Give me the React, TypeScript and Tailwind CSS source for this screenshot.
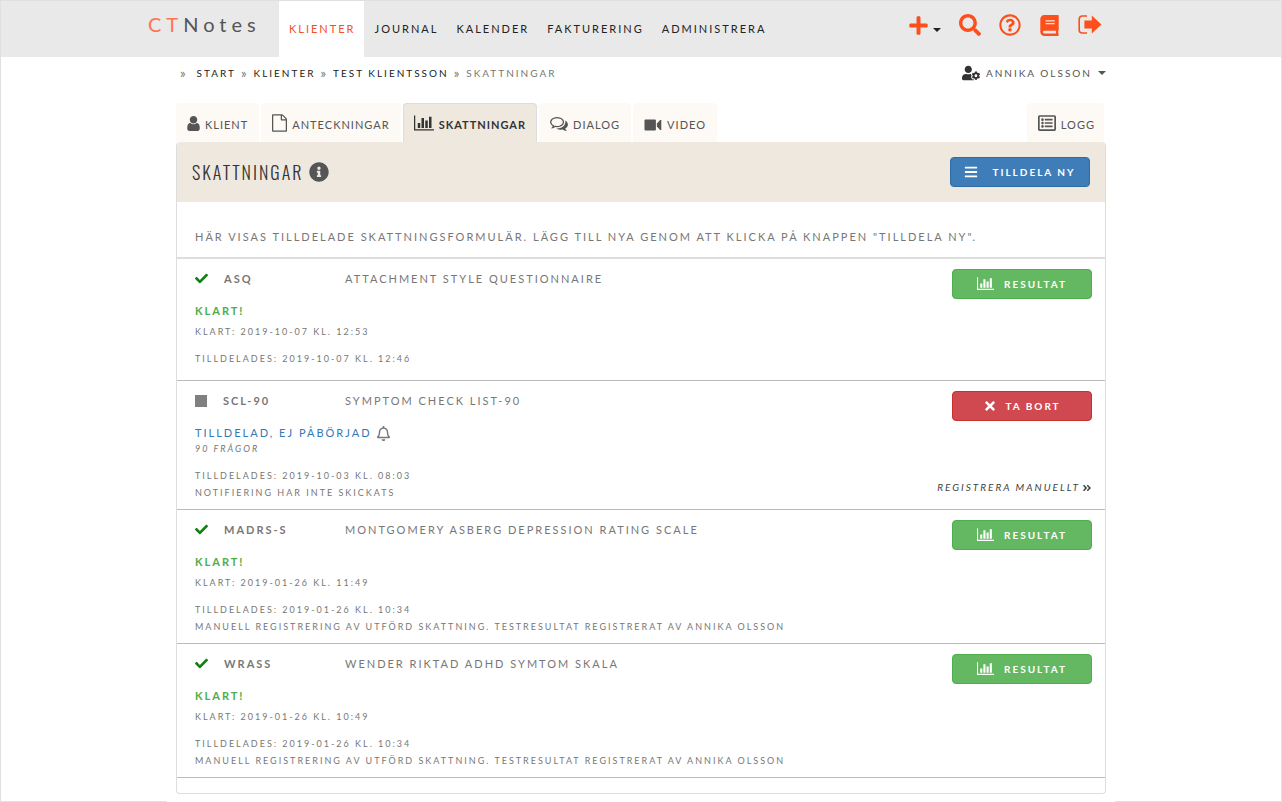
import React from "react";
import {
  FaAngleDoubleRight,
  FaBars,
  FaBook,
  FaCheck,
  FaInfoCircle,
  FaPlus,
  FaRegBell,
  FaRegListAlt,
  FaRegQuestionCircle,
  FaSearch,
  FaTimes,
  FaUserCog,
} from "react-icons/fa";

type IconProps = { className?: string };

const ChartIcon = ({ className }: IconProps) => (
  <svg viewBox="0 0 2048 1792" fill="currentColor" className={className} aria-hidden="true">
    <path d="M640 896v512h-256v-512h256zm384-512v1024h-256v-1024h256zm1024 1152v128h-2048v-1536h128v1408h1920zm-640-896v768h-256v-768h256zm384-384v1152h-256v-1152h256z" />
  </svg>
);

const UserIcon = ({ className }: IconProps) => (
  <svg viewBox="256 128 1280 1536" fill="currentColor" className={className} aria-hidden="true">
    <path d="M1536 1399q0 109-62.5 187t-150.5 78h-854q-88 0-150.5-78t-62.5-187q0-85 8.5-160.5t31.5-152 58.5-131 94-89 134.5-34.5q131 128 313 128t313-128q76 0 134.5 34.5t94 89 58.5 131 31.5 152 8.5 160.5zm-256-887q0 159-112.5 271.5t-271.5 112.5-271.5-112.5-112.5-271.5 112.5-271.5 271.5-112.5 271.5 112.5 112.5 271.5z" />
  </svg>
);

const FileIcon = ({ className }: IconProps) => (
  <svg viewBox="128 0 1536 1792" fill="currentColor" className={className} aria-hidden="true">
    <path d="M1596 380q28 28 48 76t20 88v1152q0 40-28 68t-68 28h-1344q-40 0-68-28t-28-68v-1600q0-40 28-68t68-28h896q40 0 88 20t76 48zm-444-244v376h376q-10-29-22-41l-313-313q-12-12-41-22zm384 1528v-1024h-416q-40 0-68-28t-28-68v-416h-768v1536h1280z" />
  </svg>
);

const CommentsIcon = ({ className }: IconProps) => (
  <svg viewBox="0 256 1792 1408" fill="currentColor" className={className} aria-hidden="true">
    <path d="M704 384q-153 0-286 52t-211.5 141-78.5 191q0 82 53 158t149 132l97 56-35 84q34-20 62-39l44-31 53 10q78 14 153 14 153 0 286-52t211.5-141 78.5-191-78.5-191-211.5-141-286-52zm0-128q191 0 353.5 68.5t256.5 186.5 94 257-94 257-256.5 186.5-353.5 68.5q-86 0-176-16-124 88-278 128-36 9-86 16h-3q-11 0-20.5-8t-11.5-21q-1-3-1-6.5t.5-6.5 2-6l2.5-5 3.5-5.5 4-5 4.5-5 4-4.5q5-6 23-25t26-29.5 22.5-29 25-38.5 20.5-44q-124-72-195-177t-71-224q0-139 94-257t256.5-186.5 353.5-68.5zm822 1169q10 24 20.5 44t25 38.5 22.5 29 26 29.5 23 25q1 1 4 4.5t4.5 5 4 5 3.5 5.5l2.5 5 2 6 .5 6.5-1 6.5q-3 14-13 22t-22 7q-50-7-86-16-154-40-278-128-90 16-176 16-271 0-472-132 58 4 88 4 161 0 309-45t264-129q125-92 192-212t67-254q0-77-23-152 129 71 204 178t75 230q0 120-71 224.5t-195 176.5z" />
  </svg>
);

const VideoIcon = ({ className }: IconProps) => (
  <svg viewBox="0 0 17 12" fill="currentColor" className={className} aria-hidden="true">
    <rect x="0" y="0.5" width="11.4" height="11" rx="1" />
    <path d="M12.4 4.4 15.6 1h1.2v10h-1.2l-3.2-3.4z" />
  </svg>
);

const SignOutIcon = ({ className }: IconProps) => (
  <svg viewBox="0 0 24 20" className={className} aria-hidden="true">
    <path d="M9 1H4.2a3 3 0 0 0-3 3v11a3 3 0 0 0 3 3H9" fill="none" stroke="currentColor" strokeWidth="1.6" />
    <path d="M6.4 5.6h7.4V.6L23.4 9.5l-9.6 8.9v-5H6.4z" fill="currentColor" />
  </svg>
);

const Caret = ({ className }: IconProps) => (
  <svg viewBox="0 0 8 4" fill="currentColor" className={className} aria-hidden="true">
    <path d="M0 0h8L4 4z" />
  </svg>
);

const menu = ["Klienter", "Journal", "Kalender", "Fakturering", "Administrera"];

const tabs = [
  { label: "Klient", icon: <UserIcon className="h-[15px] w-[13px] mb-[2px]" /> },
  { label: "Anteckningar", icon: <FileIcon className="h-[18px] w-[15px] mb-[1px]" /> },
  { label: "Skattningar", icon: <ChartIcon className="h-[18px] w-[20px] mb-[1px]" />, active: true },
  { label: "Dialog", icon: <CommentsIcon className="h-[14px] w-[18px] mb-[2px]" /> },
  { label: "Video", icon: <VideoIcon className="h-[12px] w-[18px] mb-[2px]" /> },
];

const scales = [
  {
    code: "ASQ",
    name: "Attachment Style Questionnaire",
    done: "2019-10-07 kl. 12:53",
    assigned: "2019-10-07 kl. 12:46",
    note: "",
  },
  {
    code: "SCL-90",
    name: "Symptom Check List-90",
    done: "",
    assigned: "2019-10-03 kl. 08:03",
    note: "Notifiering har inte skickats",
  },
  {
    code: "MADRS-S",
    name: "Montgomery Asberg Depression Rating Scale",
    done: "2019-01-26 kl. 11:49",
    assigned: "2019-01-26 kl. 10:34",
    note: "Manuell registrering av utförd skattning. Testresultat registrerat av Annika Olsson",
  },
  {
    code: "WRASS",
    name: "Wender Riktad ADHD Symtom Skala",
    done: "2019-01-26 kl. 10:49",
    assigned: "2019-01-26 kl. 10:34",
    note: "Manuell registrering av utförd skattning. Testresultat registrerat av Annika Olsson",
  },
];

const Header = () => (
  <header className="bg-[#e9e9e9]">
    <div className="mx-auto flex h-14 max-w-[990px] justify-between pr-[34px]">
      <div className="flex">
        <a href="#" className="w-[133px] pt-[11px] pl-[2px] text-[20px] leading-6 tracking-[5px] normal-case text-[#555]">
          <span className="text-[#ff7350]">CT</span>Notes
        </a>
        <nav className="flex text-[11px] text-[#222]">
          {menu.map((item, i) => (
            <a
              key={item}
              href="#"
              className={
                i === 0
                  ? "flex items-center bg-white pl-[10px] pr-2 text-[#f4511e]"
                  : "flex items-center pl-[11px] pr-[7px]"
              }
            >
              {item}
            </a>
          ))}
        </nav>
      </div>
      <div className="flex items-center gap-[18px] pb-2 text-[#fc4f1c]">
        <button aria-label="Lägg till" className="flex items-end gap-1">
          <FaPlus size={21} />
          <Caret className="h-1 w-2 mb-1 text-[#222]" />
        </button>
        <button aria-label="Sök">
          <FaSearch size={22} />
        </button>
        <button aria-label="Hjälp">
          <FaRegQuestionCircle size={22} />
        </button>
        <button aria-label="Manual">
          <FaBook size={21} />
        </button>
        <button aria-label="Logga ut">
          <SignOutIcon className="h-5 w-6" />
        </button>
      </div>
    </div>
  </header>
);

const Separator = () => <span className="text-[13px] text-[#777]">»</span>;

const Breadcrumb = () => (
  <div className="flex h-[46px] items-start justify-between pt-2 text-[10px] leading-[17px]">
    <nav className="flex gap-[5px] pl-1 text-[#222]">
      <Separator />
      <a href="#" className="pl-1">Start</a>
      <Separator />
      <a href="#">Klienter</a>
      <Separator />
      <a href="#">Test Klientsson</a>
      <Separator />
      <span className="text-[#777]">Skattningar</span>
    </nav>
    <button className="flex h-4 items-center uppercase text-[#555]">
      <FaUserCog size={18} className="mr-[6px] text-[#333]" />
      Annika Olsson
      <Caret className="ml-[6px] h-1 w-2" />
    </button>
  </div>
);

const Tabs = () => (
  <div className="flex h-[39px] items-stretch gap-[2px] pr-[2px] text-[11px] leading-4 tracking-[1px] text-[#555]">
    {tabs.map((tab) => (
      <a
        key={tab.label}
        href="#"
        className={
          tab.active
            ? "flex items-end gap-[5px] rounded-t border border-b-0 border-[#ddd] bg-[#efe8df] px-[10px] pb-[9px] font-bold text-[#333]"
            : "flex items-end gap-[5px] rounded-t bg-[#fdf9f4] px-[11px] pb-[9px]"
        }
      >
        {tab.icon}
        {tab.label}
      </a>
    ))}
    <a href="#" className="ml-auto flex items-end gap-[5px] rounded-t bg-[#fdf9f4] pl-[11px] pr-[9px] pb-[9px]">
      <FaRegListAlt size={18} className="mb-[1px]" />
      Logg
    </a>
  </div>
);

const ScaleRow = ({ scale }: { scale: (typeof scales)[number] }) => {
  const isDone = scale.done !== "";
  return (
    <li className="flex min-h-[122px] justify-between border-b border-[#bbb] pl-[18px] pr-[13px] text-[#777]">
      <div className="pt-[11px] pb-2 text-[9px] leading-[17px]">
        <div className="flex text-[11px]">
          <div className="flex w-[150px] items-center">
            {isDone ? (
              <FaCheck size={13} className="mr-4 text-[#128012]" />
            ) : (
              <span className="mr-4 h-3 w-3 bg-[#808080]" />
            )}
            <b>{scale.code}</b>
          </div>
          <span>{scale.name}</span>
        </div>
        {isDone ? (
          <>
            <p className="mt-4 text-[11px] leading-4 font-bold text-[#4cae4c]">Klart!</p>
            <p className="mt-1">Klart: {scale.done}</p>
          </>
        ) : (
          <>
            <p className="mt-4 flex items-center gap-1 text-[11px] leading-4 text-[#337ab7]">
              Tilldelad, ej påbörjad
              <FaRegBell size={15} className="text-[#777]" />
            </p>
            <p className="leading-4 italic">90 frågor</p>
          </>
        )}
        <p className="mt-[10px]">Tilldelades: {scale.assigned}</p>
        {scale.note && <p>{scale.note}</p>}
      </div>
      <div className="flex shrink-0 flex-col items-end justify-between pt-[10px] pb-[13px]">
        {isDone ? (
          <button className="flex h-[30px] w-[140px] items-center justify-center gap-[10px] rounded border border-[#4cae4c] bg-[#64b862] text-[10px] font-bold uppercase text-white">
            <ChartIcon className="mb-[2px] h-[15px] w-[17px]" />
            Resultat
          </button>
        ) : (
          <>
            <button className="flex h-[30px] w-[140px] items-center justify-center gap-2 rounded border border-[#c9302c] bg-[#d14950] text-[10px] font-bold uppercase text-white">
              <FaTimes size={14} />
              Ta bort
            </button>
            <a href="#" className="flex items-center gap-[2px] text-[10px] leading-[17px] italic text-[#444]">
              Registrera manuellt
              <FaAngleDoubleRight size={10} />
            </a>
          </>
        )}
      </div>
    </li>
  );
};

const App = () => {
  return (
    <div className="flex min-h-screen flex-col border border-[#e0e0e0] bg-white font-['Lato',sans-serif] tracking-[2px] uppercase">
      <Header />
      <main className="relative mx-auto -mb-px w-full max-w-[948px] flex-1 bg-white px-[9px] pb-2">
        <Breadcrumb />
        <Tabs />
        <section className="rounded border border-t-0 border-[#ddd]">
          <div className="flex h-[60px] items-center justify-between rounded-t bg-[#efe8df] pl-[15px] pr-[15px]">
            <h1 className="flex items-center gap-[6px] font-['Oswald','Open_Sans_Condensed','Noto_Sans_ExtraCondensed','Roboto_Condensed','Noto_Sans_Condensed',sans-serif] text-[18px] font-light text-[#333]">
              Skattningar
              <FaInfoCircle size={20} className="text-[#555]" />
            </h1>
            <button className="flex h-[30px] w-[140px] items-center justify-center gap-[14px] rounded border border-[#2e6da4] bg-[#3f7db8] text-[10px] font-bold uppercase text-white">
              <FaBars size={14} />
              Tilldela ny
            </button>
          </div>
          <p className="border-b-2 border-[#ddd] px-[18px] pt-[27px] pb-3 text-[11px] leading-4 text-[#777]">
            Här visas tilldelade skattningsformulär. Lägg till nya genom att klicka på knappen "Tilldela ny".
          </p>
          <ul className="pb-[15px]">
            {scales.map((scale) => (
              <ScaleRow key={scale.code} scale={scale} />
            ))}
          </ul>
        </section>
      </main>
    </div>
  );
};

export default App;
